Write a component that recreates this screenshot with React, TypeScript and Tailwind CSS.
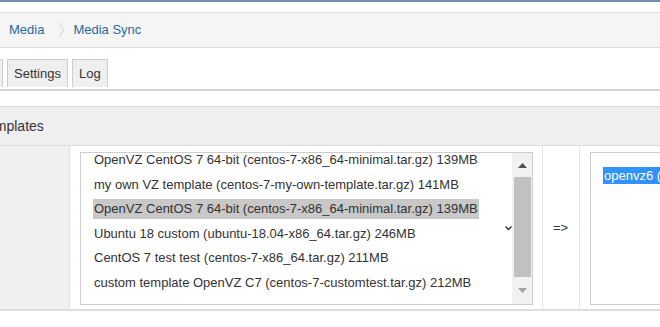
import React from "react";

const options = [
  "OpenVZ CentOS 7 64-bit (centos-7-x86_64-minimal.tar.gz) 139MB",
  "my own VZ template (centos-7-my-own-template.tar.gz) 141MB",
  "OpenVZ CentOS 7 64-bit (centos-7-x86_64-minimal.tar.gz) 139MB",
  "Ubuntu 18 custom (ubuntu-18.04-x86_64.tar.gz) 246MB",
  "CentOS 7 test test (centos-7-x86_64.tar.gz) 211MB",
  "custom template OpenVZ C7 (centos-7-customtest.tar.gz) 212MB",
];

function Scrollbar() {
  return (
    <div className="flex w-[20px] shrink-0 flex-col items-center bg-[#f1f1f1]">
      <div className="flex h-[24px] w-full items-center justify-center">
        <svg width="9" height="5" viewBox="0 0 9 5">
          <path d="M0 5 L4.5 0 L9 5 Z" fill="#505050" />
        </svg>
      </div>
      <div className="h-[100px] w-[17px] bg-[#c1c1c1]" />
      <div className="flex flex-1 w-full items-center justify-center">
        <svg width="9" height="5" viewBox="0 0 9 5">
          <path d="M0 0 L9 0 L4.5 5 Z" fill="#a3a3a3" />
        </svg>
      </div>
    </div>
  );
}

export default function App() {
  return (
    <div className="h-[327px] w-[660px] overflow-hidden bg-white text-[13px] text-[#333] font-['Liberation_Sans',Arial,sans-serif]">
      <div className="h-[2px] bg-[#6c8db0]" />

      {/* breadcrumb */}
      <div className="mt-[10px] flex h-[36px] items-center border-y border-[#dcdcdc] bg-[#f5f5f5] pl-[9px] text-[#2b6a9a]">
        <span>Media</span>
        <svg className="ml-[15px] mr-[9px]" width="5" height="14" viewBox="0 0 5 14">
          <path d="M0.5 0.5 L4.5 7 L0.5 13.5" fill="none" stroke="#cfcfcf" strokeWidth="1" />
        </svg>
        <span>Media Sync</span>
      </div>

      {/* tabs */}
      <div className="mt-[11px] flex h-[28px] gap-[4px]">
        <div className="w-[3px] border border-l-0 border-b-0 border-[#cccccc] bg-[#efefef]" />
        <div className="flex items-center border border-b-0 border-[#cccccc] bg-[#efefef] px-[6px]">Settings</div>
        <div className="flex items-center border border-b-0 border-[#cccccc] bg-[#efefef] px-[6px]">Log</div>
      </div>
      <div className="mt-[2px] h-[2px] bg-[#d4d4d4]" />

      {/* panel */}
      <div className="mt-[15px] flex h-[40px] items-center overflow-hidden border-y border-[#dcdcdc] bg-[#efefef] text-[14px]">
        <span className="ml-[-20px] whitespace-nowrap">Templates</span>
      </div>

      <div className="flex h-[165px] border-b-2 border-[#dedede]">
        <div className="w-[70px] shrink-0 border-r border-[#e2e2e2] bg-[#f0f0f0]" />

        <div className="relative w-[473px] shrink-0 border-r border-[#e6e6e6] pl-[10px] pt-[6px]">
          <div className="flex h-[153px] w-[453px] border border-[#cdcdcd]">
            <div className="min-w-0 flex-1 overflow-hidden">
              <div className="mt-[-3px] flex flex-col gap-[4.6px] pl-[12px]">
                {options.map((o, i) => (
                  <div key={i} className="h-[20px] leading-[20px] whitespace-nowrap">
                    <span className={i === 2 ? "inline-block bg-[#c8c8c8] px-[1px]" : "inline-block px-[1px]"}>{o}</span>
                  </div>
                ))}
              </div>
            </div>
            <Scrollbar />
          </div>
          <svg className="absolute left-[435px] top-[80px]" width="7" height="5" viewBox="0 0 7 5">
            <path d="M0.5 0.5 L3.5 3.5 L6.5 0.5" fill="none" stroke="#333" strokeWidth="1.4" />
          </svg>
        </div>

        <div className="flex w-[37px] shrink-0 items-center border-r border-[#e6e6e6] pl-[10px]">=&gt;</div>

        <div className="min-w-0 flex-1 overflow-hidden pl-[10px] pt-[6px]">
          <div className="h-[153px] border border-r-0 border-[#cdcdcd] pl-[12px] pt-[13px]">
            <span className="inline-block h-[17px] whitespace-nowrap bg-[#3192fb] px-[1px] leading-[17px] text-white">openvz6 (pool)</span>
          </div>
        </div>
      </div>
    </div>
  );
}
